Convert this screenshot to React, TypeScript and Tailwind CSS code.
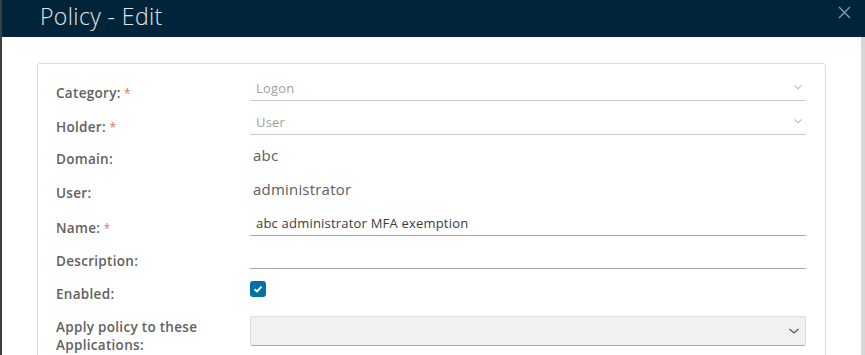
import React from 'react';

const font = { fontFamily: '"Open Sans", "Liberation Sans", sans-serif' };

const Chevron = ({ className }: { className?: string }) => (
  <svg width="12" height="8" viewBox="0 0 12 8" className={className} fill="none">
    <path d="M1.5 2 L6 6 L10.5 2" stroke="currentColor" strokeWidth="1.3" />
  </svg>
);

const Label = ({ text, required }: { text: React.ReactNode; required?: boolean }) => (
  <div className="w-[194px] shrink-0 pt-[7px] text-[13.5px] leading-[18px] font-semibold tracking-[0.3px] text-[#616161]">
    {text}
    {required && <span className="text-[12px] font-normal text-[#e8705a]"> *</span>}
  </div>
);

const App: React.FC = () => {
  return (
    <div className="w-[865px] h-[355px] overflow-hidden flex bg-white" style={font}>
      <div className="w-[2px] bg-[#3f3f3f]" />
      <div className="flex-1 flex flex-col min-h-0">
        <div className="h-[37px] shrink-0 bg-[#00253a] flex items-center justify-between pl-[38px] pr-[14px]">
          <h1 className="text-[23px] font-light text-[#e4e6e8] leading-none tracking-[0.4px] -mt-[4px]">Policy - Edit</h1>
          <svg width="13" height="13" viewBox="0 0 13 13" className="text-[#8b9aa5] -mt-[12px]">
            <path d="M1 1 L12 12 M12 1 L1 12" stroke="currentColor" strokeWidth="1.4" />
          </svg>
        </div>
        <div className="flex-1 flex min-h-0 overflow-hidden">
          <div className="flex-1 px-[35px] pt-[26px]">
            <div className="border border-[#dcdcdc] rounded-[3px] h-[320px] pl-[18px] pr-[19px] pt-[13px]">
              {/* Category */}
              <div className="flex h-[34px]">
                <Label text="Category:" required />
                <div className="flex-1 h-[24px] border-b border-[#cccccc] flex items-center justify-between pl-[6px] pr-[3px]">
                  <span className="text-[13px] tracking-[0.2px] text-[#a0a0a0]">Logon</span>
                  <Chevron className="text-[#bdbdbd] mt-[-4px] w-[10px]" />
                </div>
              </div>
              {/* Holder */}
              <div className="flex h-[32px]">
                <Label text="Holder:" required />
                <div className="flex-1 h-[24px] border-b border-[#cccccc] flex items-center justify-between pl-[6px] pr-[3px]">
                  <span className="text-[13px] tracking-[0.2px] text-[#a0a0a0]">User</span>
                  <Chevron className="text-[#bdbdbd] mt-[-4px] w-[10px]" />
                </div>
              </div>
              {/* Domain */}
              <div className="flex h-[34px]">
                <Label text="Domain:" />
                <div className="flex-1 h-[24px] flex items-center pl-[3px] text-[15px] tracking-[0.2px] text-[#5e5e5e]">abc</div>
              </div>
              {/* User */}
              <div className="flex h-[35px]">
                <Label text="User:" />
                <div className="flex-1 h-[24px] flex items-center pl-[3px] text-[15px] tracking-[0.2px] text-[#5e5e5e]">administrator</div>
              </div>
              {/* Name */}
              <div className="flex h-[33px]">
                <Label text="Name:" required />
                <div className="flex-1 h-[24px] border-b border-[#a6a6a6] flex items-center pl-[6px] text-[13px] tracking-[0.2px] text-[#3c3c3c]">
                  abc administrator MFA exemption
                </div>
              </div>
              {/* Description */}
              <div className="flex h-[33px]">
                <Label text="Description:" />
                <div className="flex-1 h-[24px] border-b border-[#a6a6a6]" />
              </div>
              {/* Enabled */}
              <div className="flex h-[33px]">
                <Label text="Enabled:" />
                <div className="flex-1 pt-[3px]">
                  <div className="w-[16px] h-[16px] rounded-[3px] bg-[#0072a3] flex items-center justify-center">
                    <svg width="10" height="8" viewBox="0 0 10 8" fill="none">
                      <path d="M1.5 4.2 L4 6.4 L8.6 1.6" stroke="white" strokeWidth="1.9" />
                    </svg>
                  </div>
                </div>
              </div>
              {/* Apply policy */}
              <div className="flex">
                <Label text={<>Apply policy to these<br />Applications:</>} />
                <div className="flex-1 mt-[5px] h-[30px] rounded-[3px] bg-[#f1f1f1] border border-[#dedede] border-b-[#a8a8a8] flex items-center justify-end pr-[5px]">
                  <Chevron className="text-[#555555]" />
                </div>
              </div>
            </div>
          </div>
          <div className="w-[4px] bg-[#d6d6d6]" />
        </div>
      </div>
    </div>
  );
};

export default App;
